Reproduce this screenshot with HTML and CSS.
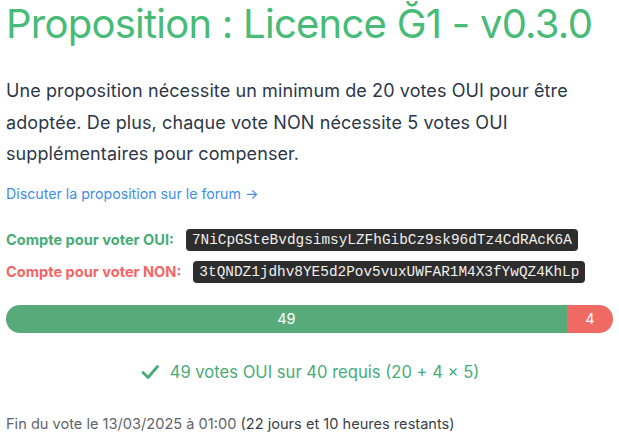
FILE: index.html
```html
<!DOCTYPE html>
<html lang="fr">
<head>
<meta charset="utf-8">
<link rel="stylesheet" href="styles.css">
</head>
<body>
<main class="page">
  <h1 class="title">Proposition : Licence Ğ1 - v0.3.0</h1>
  <p class="intro">Une proposition nécessite un minimum de 20 votes OUI pour être adoptée. De plus, chaque vote NON nécessite 5 votes OUI supplémentaires pour compenser.</p>
  <a class="forum" href="#">Discuter la proposition sur le forum →</a>
  <div class="accounts">
    <div class="account">
      <span class="label label-yes">Compte pour voter OUI:</span>
      <code class="key">7NiCpGSteBvdgsimsyLZFhGibCz9sk96dTz4CdRAcK6A</code>
    </div>
    <div class="account">
      <span class="label label-no">Compte pour voter NON:</span>
      <code class="key">3tQNDZ1jdhv8YE5d2Pov5vuxUWFAR1M4X3fYwQZ4KhLp</code>
    </div>
  </div>
  <div class="bar">
    <div class="bar-yes" style="width: 92.4%">49</div>
    <div class="bar-no">4</div>
  </div>
  <p class="status">
    <svg class="check" viewBox="0 0 20 20" width="20" height="20" aria-hidden="true"><path d="M3 10.5 L8 15.5 L17.5 4.5" fill="none" stroke="currentColor" stroke-width="2.8" stroke-linecap="round" stroke-linejoin="round"/></svg>
    <span>49 votes OUI sur 40 requis (20 + 4 × 5)</span>
  </p>
  <p class="end">Fin du vote le 13/03/2025 à 01:00 <span class="remaining">(22 jours et 10 heures restants)</span></p>
</main>
</body>
</html>
```

FILE: styles.css
```css
html, body {
  margin: 0;
  padding: 0;
  background: #ffffff;
}

body {
  font-family: Inter, "Noto Sans", sans-serif;
  color: #2d3748;
}

.page {
  display: flex;
  flex-direction: column;
  align-items: flex-start;
  padding: 0 6px;
}

.title {
  margin: 0;
  font-size: 40px;
  line-height: 48px;
  font-weight: 400;
  color: #48bb78;
  letter-spacing: -0.75px;
}

.intro {
  margin: 27px 0 0;
  font-size: 18px;
  line-height: 31.5px;
  letter-spacing: 0.1px;
  color: #2d3748;
}

.forum {
  margin-top: 14px;
  font-size: 14.2px;
  line-height: 20px;
  color: #3f8ee6;
  text-decoration: none;
}

.accounts {
  display: flex;
  flex-direction: column;
  gap: 10px;
  margin-top: 25px;
}

.account {
  display: flex;
  align-items: center;
  gap: 12px;
}

.label {
  font-size: 14.6px;
  font-weight: 700;
}

.label-yes { color: #48ac78; }
.label-no { color: #f56565; }

.key {
  font-family: "Liberation Mono", monospace;
  font-size: 14.4px;
  line-height: 22px;
  background: #2d2d2d;
  color: #f0f0f0;
  padding: 0 6px;
  border-radius: 4px;
}

.bar {
  align-self: stretch;
  display: flex;
  height: 28px;
  margin-top: 22px;
  border-radius: 14px;
  overflow: hidden;
  font-size: 14.5px;
  color: #ffffff;
}

.bar-yes {
  background: #57ab7b;
  display: flex;
  align-items: center;
  justify-content: center;
}

.bar-no {
  flex: 1;
  background: #ee6a62;
  display: flex;
  align-items: center;
  justify-content: center;
}

.status {
  align-self: stretch;
  display: flex;
  align-items: center;
  justify-content: center;
  gap: 10px;
  margin: 28px 0 0;
  font-size: 16.6px;
  line-height: 22px;
  color: #48ac78;
}

.check {
  color: #48ac78;
}

.end {
  margin: 31px 0 0;
  font-size: 14.6px;
  line-height: 20px;
  color: #5f646b;
}

.remaining {
  color: #3a3f47;
}
```
